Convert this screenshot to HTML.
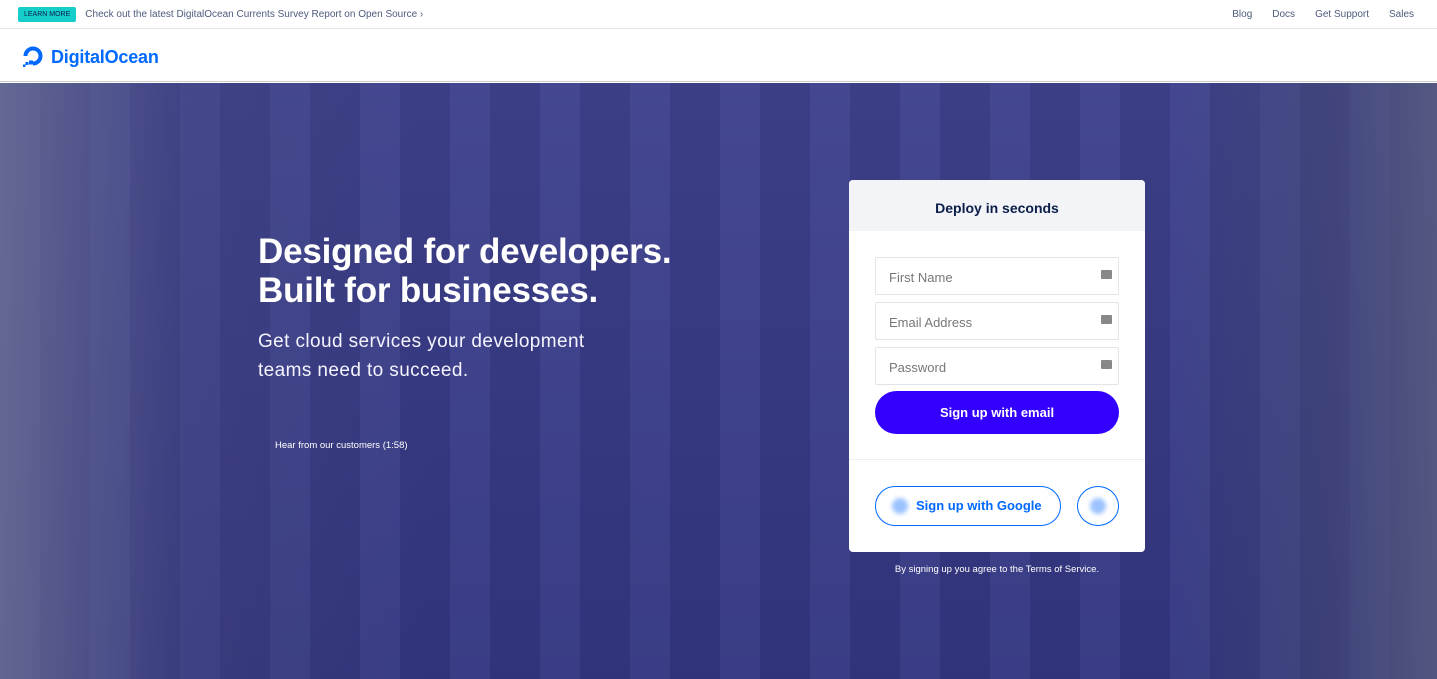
<!DOCTYPE html>
<html><head><meta charset="utf-8"><style>
*{margin:0;padding:0;box-sizing:border-box}
body{width:1437px;height:679px;overflow:hidden;font-family:"Liberation Sans",sans-serif;background:#fff;position:relative}
.top{height:29px;border-bottom:1px solid #e5e5e5;display:flex;align-items:center;padding-left:18px;font-size:10px;color:#4d5b7c}
.badge{background:#15cdcb;color:#0b1e4a;font-size:7px;padding:4px 6px;border-radius:2px;margin-right:9px}
.nav{position:absolute;right:23px;top:9px;font-size:10px;color:#4d5b7c}
.nav span{margin-left:20px}
.hdr{height:53px;display:flex;align-items:center;padding-left:21px;border-bottom:1px solid #ccc;padding-top:4px}
.logo{color:#0069ff;font-weight:bold;font-size:18px;margin-left:6px;letter-spacing:-0.2px}
.hero{position:absolute;top:83px;left:0;width:1437px;height:596px;
background:
linear-gradient(90deg,rgba(110,115,150,.75) 0,rgba(70,72,130,.35) 13%,rgba(0,0,0,0) 30%,rgba(0,0,0,0) 82%,rgba(70,75,115,.55) 93%,rgba(90,95,130,.8) 100%),
linear-gradient(180deg,rgba(255,255,255,.04),rgba(0,0,0,.05)),
repeating-linear-gradient(90deg,rgba(110,120,190,.10) 0 40px,rgba(20,20,80,.10) 40px 90px),
#373a86;}
h1{position:absolute;left:258px;top:232px;color:#fff;font-size:35px;line-height:39px;font-weight:bold;letter-spacing:-0.2px}
.sub{position:absolute;left:258px;top:327px;color:#f4f4ff;font-size:19px;line-height:29px;letter-spacing:0.4px}
.hear{position:absolute;left:275px;top:440px;color:#fff;font-size:9.5px}
.card{position:absolute;left:849px;top:180px;width:296px;height:372px;background:#fff;border-radius:4px;overflow:hidden}
.ch{height:51px;background:#f3f4f8;text-align:center;line-height:56px;font-weight:bold;color:#0b1e4a;font-size:14px}
.in{position:absolute;left:26px;width:244px;height:38px;border:1px solid #e3e4ea;border-radius:2px;font-size:13px;color:#777;padding:12px 0 0 13px}
.in:after{content:"";position:absolute;right:6px;top:12px;width:11px;height:9px;background:#888;border-radius:1px}
.btn{position:absolute;left:26px;top:211px;width:244px;height:43px;border-radius:22px;background:#3300ff;color:#fff;font-weight:bold;font-size:13px;text-align:center;line-height:43px}
.hr{position:absolute;left:0;right:0;top:279px;border-top:1px solid #eee}
.g{position:absolute;left:26px;top:306px;width:186px;height:40px;border:1.5px solid #0069ff;border-radius:20px;color:#0069ff;font-weight:bold;font-size:13px;line-height:38px;padding-left:40px}
.dot{position:absolute;width:16px;height:16px;border-radius:50%;background:#9cc2ff;filter:blur(2px)}
.c2{position:absolute;left:228px;top:306px;width:42px;height:40px;border:1.5px solid #0069ff;border-radius:50%}
.tos{position:absolute;left:849px;width:296px;top:564px;text-align:center;color:#fff;font-size:9.5px}
</style></head><body>
<div class="top"><span class="badge">LEARN MORE</span>Check out the latest DigitalOcean Currents Survey Report on Open Source ›</div>
<div class="nav"><span>Blog</span><span>Docs</span><span>Get Support</span><span>Sales</span></div>
<div class="hdr"><svg width="24" height="24" viewBox="0 0 24 24"><path d="M4.5 11A7.5 7.5 0 1 1 12 18.5" fill="none" stroke="#0069ff" stroke-width="4"/><rect x="8" y="15.5" width="4" height="4" fill="#0069ff"/><rect x="4.5" y="17" width="3" height="3" fill="#0069ff"/><rect x="2" y="19.5" width="2.5" height="2.5" fill="#0069ff"/></svg><span class="logo">DigitalOcean</span></div>
<div class="hero"></div>
<h1>Designed for developers.<br>Built for businesses.</h1>
<div class="sub">Get cloud services your development<br>teams need to succeed.</div>
<div class="hear">Hear from our customers (1:58)</div>
<div class="card">
<div class="ch">Deploy in seconds</div>
<div class="in" style="top:77px">First Name</div>
<div class="in" style="top:122px">Email Address</div>
<div class="in" style="top:167px">Password</div>
<div class="btn">Sign up with email</div>
<div class="hr"></div>
<div class="g"><span class="dot" style="left:16px;top:11px"></span>Sign up with Google</div>
<div class="c2"><span class="dot" style="left:12px;top:11px"></span></div>
</div>
<div class="tos">By signing up you agree to the Terms of Service.</div>
</body></html>
